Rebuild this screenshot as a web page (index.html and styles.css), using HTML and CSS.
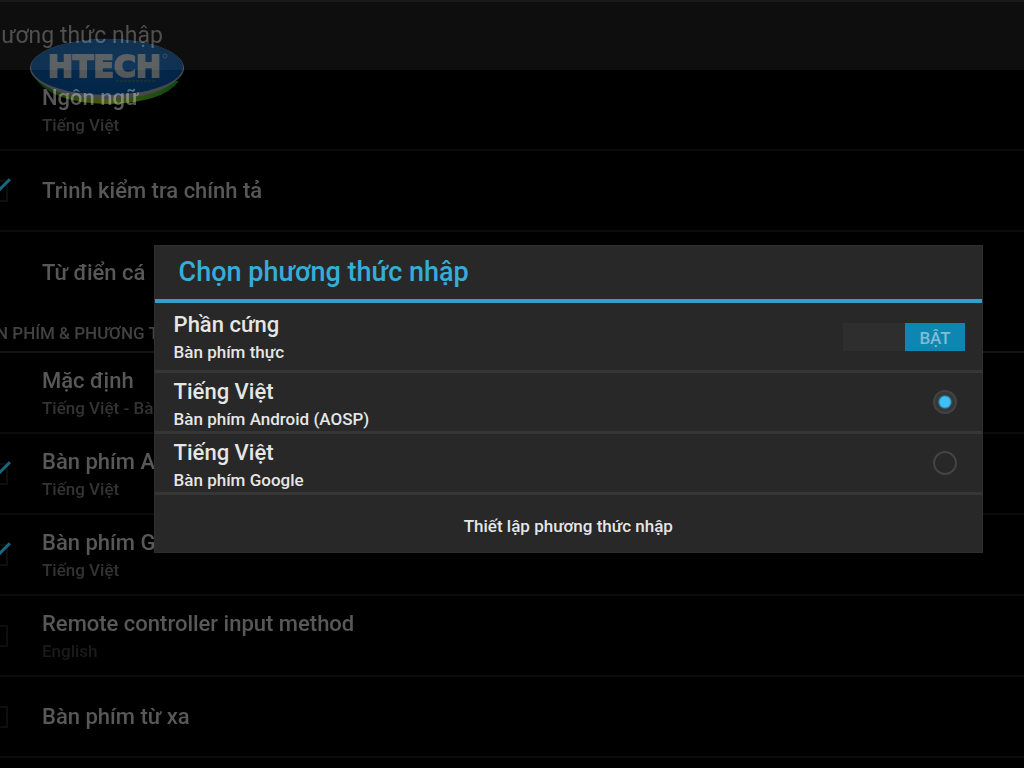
FILE: index.html
```html
<!DOCTYPE html>
<html lang="vi">

<head>
    <meta charset="UTF-8">
    <meta name="viewport" content="width=device-width, initial-scale=1.0">
    <title>Phương thức nhập</title>
    <link rel="stylesheet" href="styles.css">
</head>

<body>
    <main class="settings">
        <header class="topbar">
            <h1>Phương thức nhập</h1>
        </header>

        <div class="row">
            <div class="text">
                <div class="title">Ngôn ngữ</div>
                <div class="sub">Tiếng Việt</div>
            </div>
        </div>
        <div class="row">
            <input type="checkbox" class="check" id="spell" checked>
            <label class="text" for="spell">
                <span class="title">Trình kiểm tra chính tả</span>
            </label>
        </div>
        <div class="row last">
            <div class="text">
                <div class="title">Từ điển cá</div>
            </div>
        </div>

        <h2 class="section">BÀN PHÍM &amp; PHƯƠNG THỨC</h2>

        <div class="row">
            <div class="text">
                <div class="title">Mặc định</div>
                <div class="sub">Tiếng Việt - Bàn</div>
            </div>
        </div>
        <div class="row">
            <input type="checkbox" class="check" id="aosp" checked>
            <label class="text" for="aosp">
                <span class="title">Bàn phím A</span>
                <span class="sub">Tiếng Việt</span>
            </label>
        </div>
        <div class="row">
            <input type="checkbox" class="check" id="google" checked>
            <label class="text" for="google">
                <span class="title">Bàn phím G</span>
                <span class="sub">Tiếng Việt</span>
            </label>
        </div>
        <div class="row">
            <input type="checkbox" class="check" id="remote">
            <label class="text" for="remote">
                <span class="title">Remote controller input method</span>
                <span class="sub faint">English</span>
            </label>
        </div>
        <div class="row">
            <input type="checkbox" class="check" id="far">
            <label class="text" for="far">
                <span class="title">Bàn phím từ xa</span>
            </label>
        </div>
    </main>

    <svg class="logo" viewBox="0 0 156 70" role="img" aria-label="HTECH">
        <defs>
            <linearGradient id="rim" x1="0" x2="1" y1="0" y2="0">
                <stop offset="0" stop-color="#0a3410" />
                <stop offset="0.5" stop-color="#4a590c" />
                <stop offset="1" stop-color="#0b4812" />
            </linearGradient>
            <radialGradient id="blue" cx="0.5" cy="0.5" r="0.6">
                <stop offset="0" stop-color="#042c52" />
                <stop offset="1" stop-color="#022444" />
            </radialGradient>
        </defs>
        <path d="M4 38 Q20 66 78 67 Q134 66 150 44 Z" fill="url(#rim)" />
        <ellipse cx="78" cy="31" rx="77" ry="29" fill="#46494c" />
        <path d="M1 32 Q14 61 78 62 Q142 61 155 32 Z" fill="#46494c" />
        <ellipse cx="78" cy="30" rx="76" ry="28" fill="url(#blue)" />
        <text class="logo-name" x="19" y="40">HTECH</text>
        <circle cx="136" cy="19" r="2" fill="none" stroke="#3a4550" />
        <path d="M87 44 H127" stroke="#24382f" stroke-dasharray="3 1" />
    </svg>

    <section class="dialog" role="dialog" aria-labelledby="dialog-title">
        <h2 class="dialog-title" id="dialog-title">Chọn phương thức nhập</h2>
        <div class="option hardware">
            <label class="text" for="hw">
                <span class="title">Phần cứng</span>
                <span class="sub">Bàn phím thực</span>
            </label>
            <button class="switch" id="hw" role="switch" aria-checked="true"><span class="thumb">BẬT</span></button>
        </div>
        <div class="option">
            <label class="text" for="ime-aosp">
                <span class="title">Tiếng Việt</span>
                <span class="sub">Bàn phím Android (AOSP)</span>
            </label>
            <input type="radio" class="radio" name="ime" id="ime-aosp" checked>
        </div>
        <div class="option">
            <label class="text" for="ime-google">
                <span class="title">Tiếng Việt</span>
                <span class="sub">Bàn phím Google</span>
            </label>
            <input type="radio" class="radio" name="ime" id="ime-google">
        </div>
        <button class="setup">Thiết lập phương thức nhập</button>
    </section>
</body>

</html>
```
FILE: styles.css
```css
* {
    margin: 0;
    padding: 0;
    box-sizing: border-box;
}

body,
html {
    height: 100%;
    background: #000;
    font-family: Roboto, "Noto Sans", sans-serif;
    overflow: hidden;
}

/* the list runs off the left edge of the screen */
.settings {
    margin-left: -26px;
    color: #585858;
}

.topbar {
    height: 70px;
    display: flex;
    align-items: center;
    background: #0e0e0e;
    border-top: 2px solid #1a1a1a;
}

.topbar h1 {
    font-size: 23px;
    font-weight: 400;
    line-height: 30px;
    color: #505050;
}

.row {
    height: 81px;
    display: flex;
    align-items: center;
    padding-left: 68px;
    border-bottom: 2px solid #0b0b0b;
}

.row.last {
    border-bottom: 0;
}

.text {
    display: flex;
    flex-direction: column;
}

.title {
    font-size: 22px;
    font-weight: 500;
    line-height: 30px;
    white-space: nowrap;
}

.sub {
    font-size: 17px;
    font-weight: 500;
    line-height: 24px;
    white-space: nowrap;
}

.row .sub {
    color: #333;
}

.row .faint {
    color: #1b1b1b;
}

.section {
    height: 40px;
    line-height: 40px;
    font-size: 17px;
    font-weight: 500;
    color: #424242;
    border-bottom: 2px solid #141414;
}

.check {
    appearance: none;
    position: relative;
    flex: none;
    width: 22px;
    height: 22px;
    margin-left: -56px;
    margin-right: 34px;
    border: 2px solid #0e0e0e;
}

.check:checked::after {
    content: "";
    position: absolute;
    right: 2px;
    bottom: 3px;
    width: 10px;
    height: 22px;
    border-right: 3px solid #1c6582;
    border-bottom: 3px solid #1c6582;
    transform: rotate(45deg);
}

/* glows over the list, the text stays readable through it */
.logo {
    position: absolute;
    left: 29px;
    top: 37px;
    width: 156px;
    height: 70px;
    mix-blend-mode: screen;
}

.logo-name {
    font-family: "DejaVu Sans", sans-serif;
    font-size: 30px;
    font-weight: 700;
    fill: #55585a;
    stroke: #55585a;
    stroke-width: 2px;
}

.dialog {
    position: absolute;
    left: 15%;
    right: 4%;
    top: 245px;
    background: #282828;
    color: #e6e6e6;
    border: 1px solid #2e2e2e;
}

.dialog-title {
    height: 57px;
    padding-left: 24px;
    line-height: 52px;
    font-size: 27px;
    font-weight: 500;
    color: #36add9;
    border-bottom: 4px solid #369fc6;
}

.option {
    height: 61px;
    display: flex;
    align-items: center;
    justify-content: space-between;
    padding: 0 25px 0 19px;
    border-bottom: 3px solid #363636;
}

.option .text {
    padding-top: 4px;
}

.option.hardware {
    height: 70px;
    padding-right: 17px;
}

.option.hardware .text {
    padding-top: 0;
}

.switch {
    width: 122px;
    height: 28px;
    display: flex;
    justify-content: flex-end;
    border: 0;
    background: #2e2e2e;
}

.thumb {
    width: 60px;
    height: 28px;
    font-family: Roboto, "Noto Sans", sans-serif;
    font-size: 17px;
    font-weight: 500;
    line-height: 30px;
    color: #82bcd2;
    background: #0e86b2;
}

.radio {
    appearance: none;
    width: 24px;
    height: 24px;
    border: 2px solid #434343;
    border-radius: 50%;
}

.radio:checked {
    background: radial-gradient(circle, #3fc0f5 5px, #2b4550 7px, #363636 8px);
}

.setup {
    display: block;
    width: 100%;
    height: 57px;
    padding-top: 4px;
    border: 0;
    background: none;
    font-family: Roboto, "Noto Sans", sans-serif;
    font-size: 17px;
    font-weight: 500;
    color: #e6e6e6;
}
```
